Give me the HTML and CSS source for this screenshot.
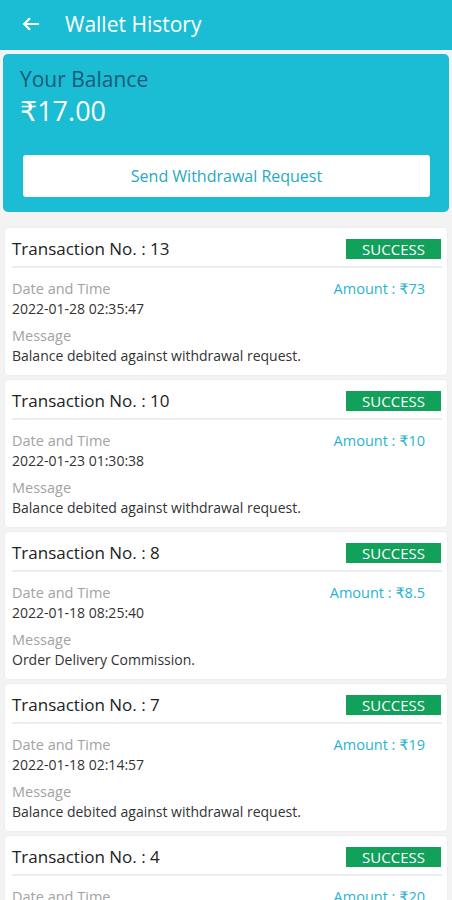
FILE: index.html
```html
<!DOCTYPE html>
<html lang="en">
<head>
    <meta charset="UTF-8">
    <meta name="viewport" content="width=device-width, initial-scale=1.0">
    <title>Wallet History</title>
    <link rel="stylesheet" href="styles.css">
</head>
<body>
    <div class="topbar">
        <svg class="back" width="18" height="14" viewBox="0 0 18 14">
            <path d="M17 7H2.5M8 1.2L2.2 7L8 12.8" fill="none" stroke="#fff" stroke-width="2.2"/>
        </svg>
        <span class="title">Wallet History</span>
    </div>

    <div class="balance">
        <div class="balance-label">Your Balance</div>
        <div class="balance-amount">₹17.00</div>
        <button class="withdraw">Send Withdrawal Request</button>
    </div>

    <div class="list">
        <div class="txn">
            <div class="txn-head">
                <span class="txn-no">Transaction No. : 13</span>
                <span class="badge">SUCCESS</span>
            </div>
            <div class="txn-body">
                <div class="row">
                    <span class="label">Date and Time</span>
                    <span class="amount">Amount : ₹73</span>
                </div>
                <div class="value">2022-01-28 02:35:47</div>
                <div class="label msg-label">Message</div>
                <div class="value">Balance debited against withdrawal request.</div>
            </div>
        </div>

        <div class="txn">
            <div class="txn-head">
                <span class="txn-no">Transaction No. : 10</span>
                <span class="badge">SUCCESS</span>
            </div>
            <div class="txn-body">
                <div class="row">
                    <span class="label">Date and Time</span>
                    <span class="amount">Amount : ₹10</span>
                </div>
                <div class="value">2022-01-23 01:30:38</div>
                <div class="label msg-label">Message</div>
                <div class="value">Balance debited against withdrawal request.</div>
            </div>
        </div>

        <div class="txn">
            <div class="txn-head">
                <span class="txn-no">Transaction No. : 8</span>
                <span class="badge">SUCCESS</span>
            </div>
            <div class="txn-body">
                <div class="row">
                    <span class="label">Date and Time</span>
                    <span class="amount">Amount : ₹8.5</span>
                </div>
                <div class="value">2022-01-18 08:25:40</div>
                <div class="label msg-label">Message</div>
                <div class="value">Order Delivery Commission.</div>
            </div>
        </div>

        <div class="txn">
            <div class="txn-head">
                <span class="txn-no">Transaction No. : 7</span>
                <span class="badge">SUCCESS</span>
            </div>
            <div class="txn-body">
                <div class="row">
                    <span class="label">Date and Time</span>
                    <span class="amount">Amount : ₹19</span>
                </div>
                <div class="value">2022-01-18 02:14:57</div>
                <div class="label msg-label">Message</div>
                <div class="value">Balance debited against withdrawal request.</div>
            </div>
        </div>

        <div class="txn">
            <div class="txn-head">
                <span class="txn-no">Transaction No. : 4</span>
                <span class="badge">SUCCESS</span>
            </div>
            <div class="txn-body">
                <div class="row">
                    <span class="label">Date and Time</span>
                    <span class="amount">Amount : ₹20</span>
                </div>
                <div class="value">2022-01-17 11:02:10</div>
                <div class="label msg-label">Message</div>
                <div class="value">Order Delivery Commission.</div>
            </div>
        </div>
    </div>
</body>
</html>
```

FILE: styles.css
```css
body {
    font-family: "Open Sans", "DejaVu Sans", sans-serif;
    margin: 0;
    background-color: #f3f3f3;
    color: #222;
}
.topbar {
    height: 50px;
    background-color: #1bbdd4;
    display: flex;
    align-items: center;
    padding: 0 0 3px 22px;
    box-sizing: border-box;
}
.back {
    display: block;
}
.title {
    margin-left: 25px;
    color: #fff;
    font-size: 21px;
    line-height: 26px;
}
.balance {
    margin: 4px 3px 0;
    background-color: #1bbdd4;
    border-radius: 5px;
    padding: 12px 17px 15px 17px;
}
.balance-label {
    font-size: 21px;
    line-height: 26px;
    color: #1b5c78;
}
.balance-amount {
    font-size: 27px;
    line-height: 36px;
    color: #fff;
    margin-top: 1px;
}
.withdraw {
    display: block;
    width: calc(100% - 5px);
    height: 42px;
    margin: 26px 2px 0 3px;
    border: none;
    border-radius: 3px;
    background-color: #fff;
    color: #27a9c3;
    font-family: inherit;
    font-size: 16px;
}
.list {
    padding: 16px 5px 0;
    display: flex;
    flex-direction: column;
    gap: 5px;
}
.txn {
    background-color: #fff;
    border-radius: 4px;
    box-shadow: 0 0 2px rgba(0, 0, 0, 0.08);
}
.txn-head {
    display: flex;
    justify-content: space-between;
    align-items: center;
    margin: 0 5px 0 7px;
    padding: 11px 1px 7px 0;
    border-bottom: 2px solid #ececec;
}
.txn-no {
    font-size: 17px;
    line-height: 20px;
    color: #222;
}
.badge {
    width: 95px;
    height: 20px;
    background-color: #12a15a;
    color: #fff;
    font-size: 15px;
    line-height: 20px;
    text-align: center;
}
.txn-body {
    padding: 11px 22px 9px 7px;
    font-size: 14.5px;
    line-height: 20px;
}
.row {
    display: flex;
    justify-content: space-between;
}
.label {
    color: #a2a2a2;
}
.amount {
    color: #2ab3d1;
    font-size: 14.5px;
}
.value {
    color: #333;
    font-size: 14px;
}
.msg-label {
    margin-top: 7px;
}
```
